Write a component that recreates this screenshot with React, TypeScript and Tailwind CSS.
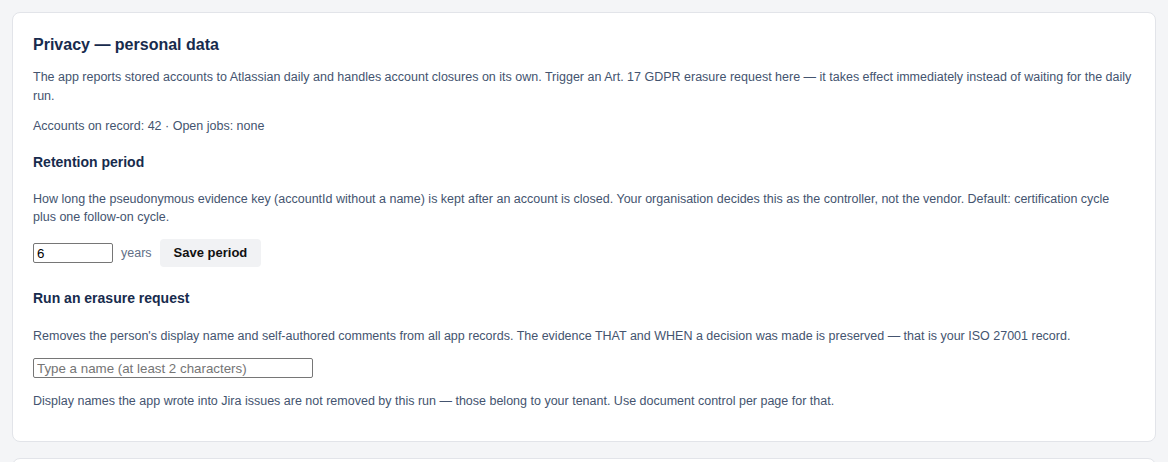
export default function App() {
  return (
    <div className="min-h-screen bg-[#f4f5f7] p-3 font-['Liberation_Sans',Arial,sans-serif]">
      <div className="flex flex-col gap-4">
        <section className="rounded-lg border border-[#e2e4e9] bg-white px-5 pt-[22px] pb-[31px]">
          <h2 className="text-[16px] font-bold leading-5 text-[#172b4d]">Privacy — personal data</h2>
          <p className="mt-[13px] text-[12.5px] leading-[19px] text-[#44546f]">
            The app reports stored accounts to Atlassian daily and handles account closures on its own. Trigger an Art. 17 GDPR erasure request here — it takes effect immediately instead of waiting for the daily run.
          </p>
          <p className="mt-[11px] text-[12.5px] leading-[19px] text-[#44546f]">
            Accounts on record: 42 · Open jobs: none
          </p>

          <h3 className="mt-[16px] text-[14px] font-bold leading-5 text-[#172b4d]">Retention period</h3>
          <p className="mt-[18px] text-[12.5px] leading-[18px] text-[#44546f]">
            How long the pseudonymous evidence key (accountId without a name) is kept after an account is closed. Your organisation decides this as the controller, not the vendor. Default: certification cycle plus one follow-on cycle.
          </p>
          <div className="mt-[13px] flex items-center gap-2">
            <input
              type="number"
              defaultValue={6}
              className="h-5 w-20 rounded-[2px] border border-[#767676] px-[3px] text-[13.33px] text-black [appearance:textfield]"
            />
            <span className="text-[12.5px] text-[#626f86]">years</span>
            <button className="h-7 rounded-[4px] bg-[#f1f2f4] px-[14px] text-[13px] font-bold text-[#111111]">
              Save period
            </button>
          </div>

          <h3 className="mt-[21px] text-[14px] font-bold leading-5 text-[#172b4d]">Run an erasure request</h3>
          <p className="mt-[19px] text-[12.5px] leading-[18px] text-[#44546f]">
            Removes the person's display name and self-authored comments from all app records. The evidence THAT and WHEN a decision was made is preserved — that is your ISO 27001 record.
          </p>
          <input
            type="text"
            placeholder="Type a name (at least 2 characters)"
            className="mt-[13px] block h-5 w-[280px] rounded-[2px] border border-[#767676] px-[3px] text-[13.33px] text-black placeholder:text-[#757575]"
          />
          <p className="mt-[14px] text-[12.5px] leading-[18px] text-[#44546f]">
            Display names the app wrote into Jira issues are not removed by this run — those belong to your tenant. Use document control per page for that.
          </p>
        </section>
        <section className="h-24 rounded-lg border border-[#e2e4e9] bg-white" />
      </div>
    </div>
  );
}
